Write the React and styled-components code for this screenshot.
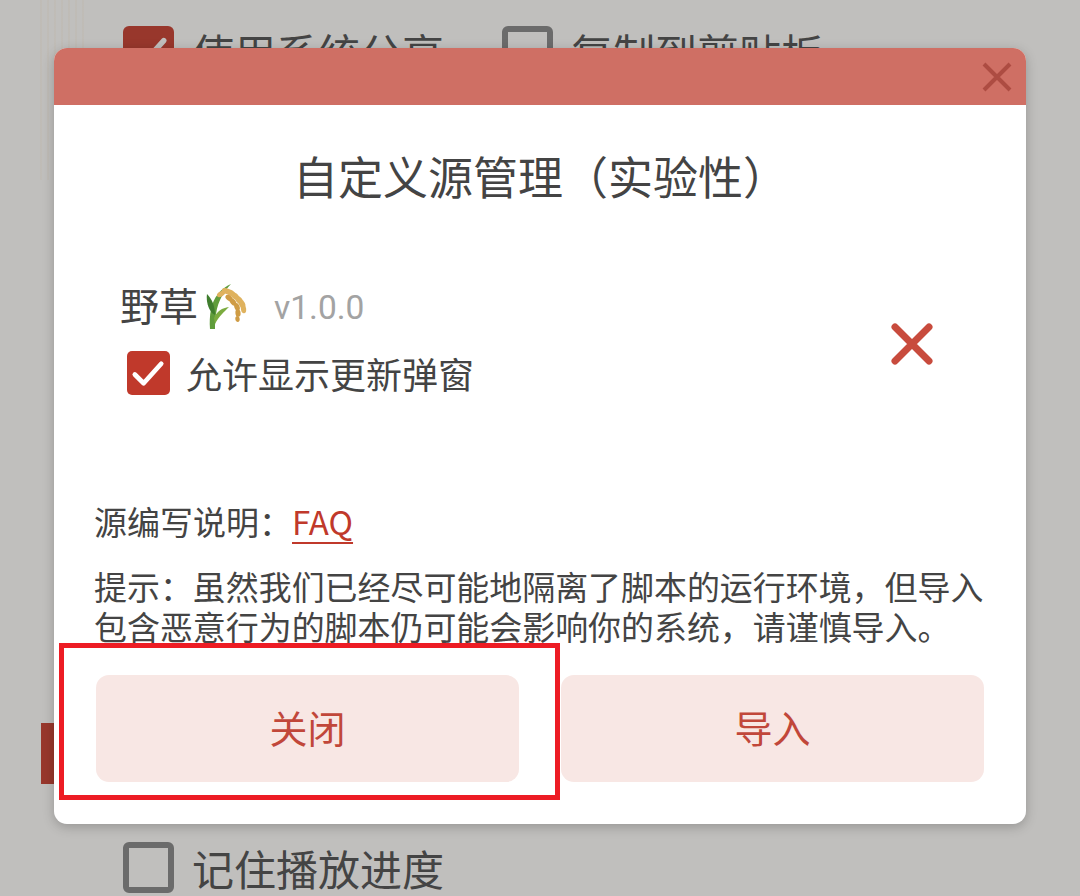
import styled, { createGlobalStyle } from "styled-components"

const sans = `"Noto Sans CJK SC", "Noto Sans", sans-serif`

const GlobalStyle = createGlobalStyle`
    html, body {
        margin: 0;
        padding: 0;
        width: 1080px;
        height: 896px;
        overflow: hidden;
        background: #c0bfbd;
        font-family: ${sans};
    }
`

const Page = styled.div`
    position: relative;
    width: 1080px;
    height: 896px;
    overflow: hidden;
    background: #c0bfbd;
`

const Stripes = styled.div`
    position: absolute;
    left: 40px;
    top: 0;
    width: 46px;
    height: 180px;
    background: repeating-linear-gradient(90deg, rgba(190, 182, 170, 0.35) 0 2px, rgba(192, 191, 189, 0) 2px 7px);
`

const Behind = styled.div`
    height: 100%;
    box-sizing: border-box;
    padding: 26px 0 3px 123px;
    display: flex;
    flex-direction: column;
    justify-content: space-between;
`

const BehindRow = styled.div`
    display: flex;
    align-items: center;
    gap: 58px;
`

const BehindOption = styled.div`
    display: flex;
    align-items: center;
    gap: 18px;
    font-size: 42px;
    line-height: 50px;
    color: #444;
`

const BehindBox = styled.span`
    width: 51px;
    height: 51px;
    box-sizing: border-box;
    border-radius: 6px;
    border: ${(p) => (p.$checked ? "none" : "6px solid #6b6b6b")};
    background: ${(p) => (p.$checked ? "#98372c" : "transparent")};
    display: flex;
    align-items: center;
    justify-content: center;
`

const SideBar = styled.div`
    position: absolute;
    left: 41px;
    top: 723px;
    width: 13px;
    height: 61px;
    background: #98372c;
`

const Modal = styled.div`
    position: absolute;
    left: 54px;
    top: 48px;
    width: 972px;
    height: 776px;
    background: #fff;
    border-radius: 13px;
    box-shadow: 0 3px 12px rgba(0, 0, 0, 0.22);
    display: flex;
    flex-direction: column;
    overflow: hidden;
`

const ModalHeader = styled.div`
    height: 57px;
    flex-shrink: 0;
    background: #cf6f64;
    display: flex;
    align-items: center;
    justify-content: flex-end;
    padding-right: 13px;
`

const HeaderClose = styled.svg`
    width: 32px;
    height: 32px;
    stroke: #ad4c42;
    stroke-width: 4;
    fill: none;
`

const ModalBody = styled.div`
    flex: 1;
    display: flex;
    flex-direction: column;
    padding: 0 39px 42px 40px;
`

const Title = styled.h1`
    margin: 42px 0 0;
    font-size: 45px;
    font-weight: 400;
    line-height: 58px;
    color: #444;
    text-align: center;
`

const SourceRow = styled.div`
    margin-top: 75px;
    height: 115px;
    padding: 0 53px 0 26px;
    display: flex;
    align-items: center;
    justify-content: space-between;
`

const SourceInfo = styled.div`
    display: flex;
    flex-direction: column;
    gap: 23px;
`

const SourceName = styled.div`
    height: 48px;
    display: flex;
    align-items: center;
    font-size: 39px;
    line-height: 48px;
    color: #444;
`

const Rice = styled.svg`
    margin: 5px 0 0 7px;
    width: 42px;
    height: 46px;
`

const Version = styled.span`
    margin: 8px 0 0 27px;
    font-family: Roboto, sans-serif;
    font-size: 33.5px;
    color: #a3a3a3;
`

const Allow = styled.label`
    display: flex;
    align-items: center;
    gap: 16px;
    padding-left: 7px;
    font-size: 36px;
    line-height: 44px;
    color: #444;
`

const CheckBox = styled.span`
    width: 43px;
    height: 44px;
    border-radius: 5px;
    background: #c0392b;
    display: flex;
    align-items: center;
    justify-content: center;
`

const DeleteButton = styled.svg`
    margin-top: 12px;
    width: 44px;
    height: 44px;
    stroke: #c84b3d;
    stroke-width: 7;
    stroke-linecap: round;
`

const DocLine = styled.div`
    margin-top: 104px;
    font-size: 33px;
    line-height: 44px;
    color: #444;
`

const DocLink = styled.a`
    color: #c0392b;
    text-decoration: underline;
    text-decoration-thickness: 2px;
    text-underline-offset: 7px;
`

const Hint = styled.p`
    margin: 23px 0 0;
    font-size: 32.95px;
    line-height: 40px;
    color: #444;
`

const Actions = styled.div`
    margin-top: auto;
    padding: 0 3px 0 2px;
    display: grid;
    grid-template-columns: 1fr 1fr;
    gap: 42px;
`

const Button = styled.button`
    height: 107px;
    padding: 0 0 4px;
    border: none;
    border-radius: 13px;
    background: #f8e7e4;
    color: #c1473a;
    font-family: ${sans};
    font-size: 38px;
`

const Highlight = styled.div`
    position: absolute;
    left: 59px;
    top: 643px;
    width: 501px;
    height: 157px;
    box-sizing: border-box;
    border: 5px solid #ed1c24;
`

const CheckMark = ({ color, size }) => (
    <svg width={size} height={size} viewBox="0 0 44 44" fill="none" stroke={color} strokeWidth="4.8" strokeLinecap="round" strokeLinejoin="round">
        <path d="M8 23 L17 32 L35 12" />
    </svg>
)

const RiceIcon = () => (
    <Rice viewBox="0 0 42 46">
        <path d="M5 45 C4 32 6 18 13 10 C17 5 21 2 26 0 C20 6 13 16 11 30 C10 36 10 41 10 45 Z" fill="#5f9c3b" />
        <path d="M7 29 C3 24 1 17 2 10 C7 15 10 22 10 31 Z" fill="#3f7d2e" />
        <path d="M9 34 C12 27 17 24 24 23 C19 28 14 32 10 40 Z" fill="#7bab3f" />
        <g fill="#dfb25e">
            <ellipse cx="16" cy="10" rx="4.4" ry="2.6" transform="rotate(-30 16 10)" />
            <ellipse cx="21" cy="7" rx="4.4" ry="2.8" transform="rotate(10 21 7)" />
            <ellipse cx="26" cy="9" rx="4.4" ry="3" transform="rotate(30 26 9)" />
            <ellipse cx="30" cy="12" rx="4.4" ry="3" transform="rotate(40 30 12)" />
            <ellipse cx="34" cy="16" rx="4.4" ry="3" transform="rotate(50 34 16)" />
            <ellipse cx="37" cy="20" rx="4.4" ry="3" transform="rotate(65 37 20)" />
            <ellipse cx="38.5" cy="25" rx="4.2" ry="2.6" transform="rotate(80 38.5 25)" />
        </g>
        <g fill="#cf9c45">
            <ellipse cx="24" cy="14" rx="4" ry="2.6" transform="rotate(40 24 14)" />
            <ellipse cx="28" cy="18" rx="4" ry="2.6" transform="rotate(50 28 18)" />
            <ellipse cx="32" cy="23" rx="4" ry="2.6" transform="rotate(70 32 23)" />
            <ellipse cx="33" cy="29" rx="3.8" ry="2.6" transform="rotate(85 33 29)" />
            <ellipse cx="32.5" cy="35" rx="3" ry="2.2" transform="rotate(85 32.5 35)" />
        </g>
    </Rice>
)

export default function App() {
    return (
        <Page>
            <GlobalStyle />
            <Stripes />
            <Behind>
                <BehindRow>
                    <BehindOption>
                        <BehindBox $checked><CheckMark color="#c0bfbd" size={50} /></BehindBox>
                        使用系统分享
                    </BehindOption>
                    <BehindOption>
                        <BehindBox />
                        复制到剪贴板
                    </BehindOption>
                </BehindRow>
                <BehindRow>
                    <BehindOption>
                        <BehindBox />
                        记住播放进度
                    </BehindOption>
                </BehindRow>
            </Behind>
            <SideBar />
            <Modal>
                <ModalHeader>
                    <HeaderClose viewBox="0 0 32 32">
                        <path d="M3 3 L29 29 M29 3 L3 29" />
                    </HeaderClose>
                </ModalHeader>
                <ModalBody>
                    <Title>自定义源管理（实验性）</Title>
                    <SourceRow>
                        <SourceInfo>
                            <SourceName>
                                野草<RiceIcon />
                                <Version>v1.0.0</Version>
                            </SourceName>
                            <Allow>
                                <CheckBox><CheckMark color="#fff" size={43} /></CheckBox>
                                允许显示更新弹窗
                            </Allow>
                        </SourceInfo>
                        <DeleteButton viewBox="0 0 44 44">
                            <path d="M5 5 L39 39 M39 5 L5 39" />
                        </DeleteButton>
                    </SourceRow>
                    <DocLine>
                        源编写说明：<DocLink>FAQ</DocLink>
                    </DocLine>
                    <Hint>提示：虽然我们已经尽可能地隔离了脚本的运行环境，但导入包含恶意行为的脚本仍可能会影响你的系统，请谨慎导入。</Hint>
                    <Actions>
                        <Button>关闭</Button>
                        <Button>导入</Button>
                    </Actions>
                </ModalBody>
            </Modal>
            <Highlight />
        </Page>
    )
}
